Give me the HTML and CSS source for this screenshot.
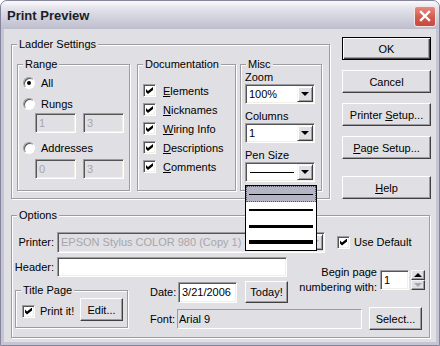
FILE: index.html
```html
<!DOCTYPE html>
<html lang="en">

<head>
  <meta charset="UTF-8" />
  <title>Print Preview</title>
  <link rel="stylesheet" href="styles.css">
</head>

<body>
  <div class="window">
    <div class="titlebar">
      <span class="title">Print Preview</span>
      <span class="close">
        <svg width="20" height="19" viewBox="0 0 20 19"><path d="M6 5 L14 13 M14 5 L6 13" stroke="#fff" stroke-width="2.4" stroke-linecap="square" /></svg>
      </span>
    </div>

    <div class="client">
      <div class="top-row">
        <div class="group ladder">
          <span class="legend">Ladder Settings</span>

          <div class="group range">
            <span class="legend">Range</span>
            <div class="radio-row"><span class="radio checked"></span>All</div>
            <div class="radio-row rungs"><span class="radio"></span>Rungs</div>
            <div class="edit-pair"><span class="edit disabled">1</span><span class="edit disabled">3</span></div>
            <div class="radio-row addresses"><span class="radio"></span>Addresses</div>
            <div class="edit-pair second"><span class="edit disabled">0</span><span class="edit disabled">3</span></div>
          </div>

          <div class="group docs">
            <span class="legend">Documentation</span>
            <div class="check-row"><span class="check on"></span><span><u>E</u>lements</span></div>
            <div class="check-row"><span class="check on"></span><span><u>N</u>icknames</span></div>
            <div class="check-row"><span class="check on"></span><span><u>W</u>iring Info</span></div>
            <div class="check-row"><span class="check on"></span><span><u>D</u>escriptions</span></div>
            <div class="check-row"><span class="check on"></span><span><u>C</u>omments</span></div>
          </div>

          <div class="group misc">
            <span class="legend">Misc</span>
            <div class="field">
              <div class="field-label">Zoom</div>
              <div class="combo"><span class="combo-text">100%</span><span class="combo-btn"><span class="arrow-down"></span></span></div>
            </div>
            <div class="field">
              <div class="field-label">Columns</div>
              <div class="combo"><span class="combo-text">1</span><span class="combo-btn"><span class="arrow-down"></span></span></div>
            </div>
            <div class="field">
              <div class="field-label">Pen Size</div>
              <div class="combo"><span class="combo-text"><span class="pen pen-1"></span></span><span class="combo-btn"><span class="arrow-down"></span></span></div>
            </div>
          </div>
        </div>

        <div class="buttons">
          <button class="btn default">OK</button>
          <button class="btn">Cancel</button>
          <button class="btn">Printer <u>S</u>etup...</button>
          <button class="btn"><u>P</u>age Setup...</button>
          <button class="btn help"><u>H</u>elp</button>
        </div>
      </div>

      <div class="group options">
        <span class="legend">Options</span>

        <div class="opt-row printer-row">
          <span class="opt-label">Printer:</span>
          <div class="combo disabled printer-combo">
            <span class="combo-text">EPSON Stylus COLOR 980 (Copy 1) on USB001</span>
            <span class="combo-btn"><span class="arrow-down grey"></span></span>
          </div>
          <div class="check-row use-default"><span class="check on"></span><span>Use Default</span></div>
        </div>

        <div class="opt-row header-row">
          <span class="opt-label">Header:</span>
          <span class="edit header-edit"></span>
        </div>

        <div class="opt-bottom">
          <div class="group title-page">
            <span class="legend">Title Page</span>
            <div class="title-row">
              <span class="check on"></span>
              <span class="print-it">Print it!</span>
              <button class="btn edit-btn">Edit...</button>
            </div>
          </div>

          <div class="opt-middle">
            <div class="date-row">
              <span class="small-label">Date:</span>
              <span class="edit date-edit">3/21/2006</span>
              <button class="btn today">Today!</button>
              <div class="begin">
                <span class="begin-label">Begin page<br>numbering with:</span>
                <span class="edit begin-edit">1</span>
                <span class="spin">
                  <span class="spin-btn"><span class="arrow-up"></span></span>
                  <span class="spin-btn"><span class="arrow-down grey"></span></span>
                </span>
              </div>
            </div>
            <div class="font-row">
              <span class="small-label font-label">Font:</span>
              <span class="static-field">Arial 9</span>
              <button class="btn select">Select...</button>
            </div>
          </div>
        </div>
      </div>
    </div>

    <!-- open pen size list -->
    <div class="droplist">
      <div class="drop-item selected"><span class="pen pen-1"></span></div>
      <div class="drop-item"><span class="pen pen-2"></span></div>
      <div class="drop-item"><span class="pen pen-3"></span></div>
      <div class="drop-item"><span class="pen pen-4"></span></div>
    </div>
  </div>
</body>

</html>
```

FILE: styles.css
```css
* {
  box-sizing: border-box;
}

body {
  margin: 0;
  background: #fff;
  font: 11px "Liberation Sans", Arial, sans-serif;
  color: #000;
}

u {
  text-decoration: underline;
  text-underline-offset: 1px;
}

.window {
  position: relative;
  width: 440px;
  height: 346px;
  border: 1px solid #85859b;
  border-radius: 7px 7px 0 0;
  background: #c5c5d3;
  display: flex;
  flex-direction: column;
  overflow: hidden;
}

/* title bar */
.titlebar {
  height: 28px;
  display: flex;
  align-items: center;
  justify-content: space-between;
  padding: 0 3px 0 6px;
  background: linear-gradient(#fbfbfd 0%, #e4e4ec 25%, #d2d2de 60%, #bdbdcd 100%);
}

.title {
  font: bold 13px "Liberation Sans", Arial, sans-serif;
  color: #1c1c28;
  margin-top: 1px;
}

.close {
  width: 22px;
  height: 21px;
  border: 1px solid #f4e6e4;
  border-radius: 3px;
  background: linear-gradient(#e68a80, #d25a4f 55%, #c8483e);
  display: flex;
  align-items: center;
  justify-content: center;
  margin-top: 2px;
}

/* client area */
.client {
  flex: 1;
  margin: 0 3px 3px 3px;
  background: #e0dfe3;
  padding: 8px 0 0 7px;
}

.top-row {
  display: flex;
  align-items: flex-start;
}

/* group boxes */
.group {
  position: relative;
  border: 1px solid #9d9da1;
  box-shadow: inset 1px 1px #fff, 1px 1px #fff;
}

.legend {
  position: absolute;
  top: -8px;
  left: 5px;
  padding: 0 2px;
  line-height: 14px;
  background: #e0dfe3;
  white-space: nowrap;
}

.ladder {
  width: 319px;
  height: 155px;
  margin-top: 7px;
  display: flex;
  padding: 19px 0 0 5px;
}

.range {
  width: 113px;
  height: 127px;
  padding-top: 10px;
}

.docs {
  width: 99px;
  height: 127px;
  margin-left: 7px;
  padding: 16px 0 0 5px;
}

.misc {
  width: 82px;
  height: 127px;
  margin-left: 4px;
  padding: 6px 0 0 4px;
}

/* radios */
.radio-row {
  height: 16px;
  display: flex;
  align-items: center;
  padding-left: 5px;
}

.radio-row.rungs {
  margin-top: 5px;
}

.radio-row.addresses {
  margin-top: 7px;
}

.radio {
  width: 12px;
  height: 12px;
  margin-right: 6px;
  border-radius: 50%;
  background: #fff;
  border: 1px solid;
  border-color: #9d9da1 #fff #fff #9d9da1;
  box-shadow: inset 1px 1px #555;
  display: flex;
  align-items: center;
  justify-content: center;
}

.radio.checked::after {
  content: "";
  width: 4px;
  height: 4px;
  border-radius: 50%;
  background: #000;
}

/* edits */
.edit {
  display: block;
  height: 20px;
  padding: 2px 3px;
  line-height: 15px;
  background: #fff;
  border: 1px solid;
  border-color: #9d9da1 #fff #fff #9d9da1;
  box-shadow: inset 1px 1px #555, inset -1px -1px #f1efe6;
  white-space: nowrap;
  overflow: hidden;
}

.edit.disabled {
  background: #e0dfe3;
  color: #a7a6aa;
}

.edit-pair {
  display: flex;
  gap: 7px;
  margin-top: 1px;
  padding-left: 17px;
}

.edit-pair.second {
  margin-top: 3px;
}

.edit-pair .edit {
  width: 41px;
}

/* checkboxes */
.check-row {
  height: 19px;
  display: flex;
  align-items: center;
}

.check {
  flex: none;
  width: 13px;
  height: 13px;
  margin-right: 7px;
  background: #fff;
  border: 1px solid;
  border-color: #9d9da1 #fff #fff #9d9da1;
  box-shadow: inset 1px 1px #555, inset -1px -1px #f1efe6;
  position: relative;
}

.check.on::after {
  content: "";
  position: absolute;
  left: 2px;
  top: 2px;
  width: 7px;
  height: 7px;
  background: #000;
  clip-path: polygon(0 28%, 28% 57%, 100% 0, 100% 43%, 28% 100%, 0 71%);
}

/* misc combos */
.field + .field {
  margin-top: 6px;
}

.field-label {
  line-height: 13px;
}

.combo {
  width: 70px;
  height: 20px;
  display: flex;
  align-items: center;
  padding: 1px;
  background: #fff;
  border: 1px solid;
  border-color: #9d9da1 #fff #fff #9d9da1;
  box-shadow: inset 1px 1px #555, inset -1px -1px #f1efe6;
}

.combo-text {
  flex: 1;
  padding-left: 2px;
  display: flex;
  align-items: center;
  white-space: nowrap;
  overflow: hidden;
}

.combo-btn {
  flex: none;
  width: 16px;
  height: 16px;
  background: #e0dfe3;
  border: 1px solid;
  border-color: #f4f4f4 #404040 #404040 #f4f4f4;
  box-shadow: inset 1px 1px #fff, inset -1px -1px #9d9da1;
  display: flex;
  align-items: center;
  justify-content: center;
}

.arrow-down {
  width: 0;
  height: 0;
  border-left: 4px solid transparent;
  border-right: 4px solid transparent;
  border-top: 4px solid #000;
}

.arrow-up {
  width: 0;
  height: 0;
  border-left: 4px solid transparent;
  border-right: 4px solid transparent;
  border-bottom: 4px solid #000;
}

.arrow-down.grey {
  border-top-color: #a7a6aa;
}

.pen {
  display: block;
  background: #000;
}

.combo .pen {
  width: 44px;
  height: 1px;
  margin-left: 1px;
}

.pen-1 { height: 1px; }
.pen-2 { height: 2px; }
.pen-3 { height: 3px; }
.pen-4 { height: 4px; }

/* buttons */
.btn {
  font: 11px "Liberation Sans", Arial, sans-serif;
  color: #000;
  height: 23px;
  padding: 0;
  background: #e0dfe3;
  border: 1px solid;
  border-color: #fff #404040 #404040 #fff;
  box-shadow: inset -1px -1px #9d9da1;
}

.btn.default {
  border: 1px solid #000;
  box-shadow: inset 1px 1px #fff, inset -1px -1px #404040, inset -2px -2px #9d9da1;
}

.buttons {
  width: 89px;
  margin-left: 12px;
  display: flex;
  flex-direction: column;
  gap: 10px;
}

.buttons .help {
  margin-top: 7px;
}

/* options */
.options {
  width: 419px;
  height: 123px;
  margin-top: 16px;
  padding-top: 15px;
}

.opt-row {
  display: flex;
  align-items: center;
}

.opt-label {
  width: 42px;
  margin-right: 3px;
  text-align: right;
}

.printer-row {
  height: 22px;
}

.printer-combo {
  width: 268px;
  height: 21px;
  background: #e0dfe3;
  color: #a7a6aa;
}

.use-default {
  margin-left: 12px;
}

.use-default .check {
  margin-right: 4px;
}

.header-row {
  height: 20px;
  margin-top: 4px;
}

.header-edit {
  width: 230px;
}

.opt-bottom {
  display: flex;
  align-items: flex-start;
  margin-top: 4px;
}

.title-page {
  width: 113px;
  height: 38px;
  margin: 9px 0 0 3px;
  padding: 0 4px 0 6px;
}

.title-row {
  height: 23px;
  margin-top: 7px;
  display: flex;
  align-items: center;
}

.title-row .check {
  margin-right: 5px;
  margin-top: 3px;
}

.title-row .print-it {
  margin-top: 3px;
}

.edit-btn {
  width: 43px;
  margin-left: auto;
}

.opt-middle {
  flex: 1;
  margin-left: 22px;
  padding-right: 4px;
}

.date-row {
  height: 22px;
  display: flex;
  align-items: center;
}

.small-label {
  width: 28px;
}

.date-edit {
  width: 59px;
  height: 21px;
}

.today {
  width: 43px;
  height: 22px;
  margin-left: 8px;
}

.begin {
  margin-left: auto;
  align-self: flex-start;
  margin-top: -11px;
  display: flex;
  align-items: flex-start;
}

.begin-label {
  text-align: right;
  line-height: 15px;
  margin: -5px 3px 0 0;
}

.begin-edit {
  width: 29px;
}

.spin {
  margin-left: 2px;
  width: 14px;
  height: 20px;
  display: flex;
  flex-direction: column;
}

.spin-btn {
  height: 10px;
  background: #e0dfe3;
  border: 1px solid;
  border-color: #f4f4f4 #404040 #404040 #f4f4f4;
  box-shadow: inset -1px -1px #9d9da1;
  display: flex;
  align-items: center;
  justify-content: center;
}

.font-row {
  height: 23px;
  margin-top: 4px;
  display: flex;
  align-items: center;
}

.font-label {
  width: 27px;
}

.static-field {
  width: 185px;
  height: 20px;
  line-height: 18px;
  padding-left: 1px;
  border: 1px solid;
  border-color: #9d9da1 #fff #fff #9d9da1;
}

.select {
  width: 53px;
  margin-left: 7px;
}

/* open drop-down list of pen sizes */
.droplist {
  position: absolute;
  left: 244px;
  top: 184px;
  width: 72px;
  height: 66px;
  background: #fff;
  border: 1px solid #000;
}

.drop-item {
  height: 16px;
  display: flex;
  align-items: center;
  padding: 0 3px;
}

.drop-item .pen {
  width: 64px;
}

.drop-item.selected {
  background: #b4b5c4;
  outline: 1px dotted #555;
  outline-offset: -1px;
}
```
